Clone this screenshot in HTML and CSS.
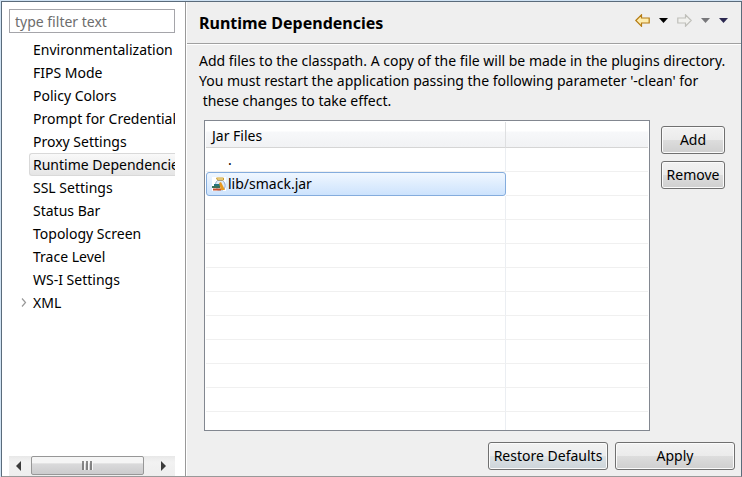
FILE: index.html
```html
<!DOCTYPE html>
<html lang="en">
<head>
<meta charset="utf-8">
<title>Preferences</title>
<link rel="stylesheet" href="styles.css">
</head>
<body>
<div class="window">
  <aside class="sidebar">
    <input class="filter" type="text" placeholder="type filter text" aria-label="Filter preferences">
    <nav class="tree">
      <a href="#">Environmentalization</a>
      <a href="#">FIPS Mode</a>
      <a href="#">Policy Colors</a>
      <a href="#">Prompt for Credentials</a>
      <a href="#">Proxy Settings</a>
      <a href="#" class="selected">Runtime Dependencies</a>
      <a href="#">SSL Settings</a>
      <a href="#">Status Bar</a>
      <a href="#">Topology Screen</a>
      <a href="#">Trace Level</a>
      <a href="#">WS-I Settings</a>
      <a href="#" class="parent"><svg class="twisty" viewBox="0 0 6 9"><path d="M1 .5 4.500 4.500 1 8.500" fill="none" stroke="#999" stroke-width="1.200"/></svg>XML</a>
    </nav>
    <div class="scrollbar">
      <button class="scroll-arrow" aria-label="Scroll left"><svg viewBox="0 0 5 10"><path d="M5 0v10L0 5z" fill="#3c3c3c"/></svg></button>
      <div class="thumb"><svg class="grip" viewBox="0 0 11 9"><path d="M1 0v9M5 0v9M9 0v9" stroke="#666" stroke-width="1.500"/><path d="M2.500 0v9M6.500 0v9M10.500 0v9" stroke="#f8f8f8"/></svg></div>
      <button class="scroll-arrow forward" aria-label="Scroll right"><svg viewBox="0 0 5 10"><path d="M0 0v10l5-5z" fill="#3c3c3c"/></svg></button>
    </div>
  </aside>
  <main class="page">
    <header class="page-header">
      <h1>Runtime Dependencies</h1>
      <div class="history">
        <button aria-label="Back"><svg class="arrow" viewBox="0 0 15 13"><path d="M.8 6.500 6.500.8V4h7.700v5H6.500v3.200z" fill="#fdecae" stroke="#b57c14" stroke-width="1.200"/></svg></button>
        <button aria-label="Back history"><svg class="caret" viewBox="0 0 9 5"><path d="M0 0h9L4.500 5z" fill="#000"/></svg></button>
        <button aria-label="Forward"><svg class="arrow" viewBox="0 0 15 13"><path d="M14.200 6.500 8.500.8V4H.8v5h7.700v3.200z" fill="#f1f1ee" stroke="#bfbfba" stroke-width="1.200"/></svg></button>
        <button aria-label="Forward history"><svg class="caret" viewBox="0 0 9 5"><path d="M0 0h9L4.500 5z" fill="#77777a"/></svg></button>
        <button aria-label="Menu"><svg class="caret" viewBox="0 0 9 5"><path d="M0 0h9L4.500 5z" fill="#2b2850"/></svg></button>
      </div>
    </header>
    <p class="description">Add files to the classpath. A copy of the file will be made in the plugins directory.<br>You must restart the application passing the following parameter '-clean' for<br>&nbsp;these changes to take effect.</p>
    <div class="content">
      <div class="table-box">
        <table>
          <thead><tr><th class="name">Jar Files</th><th></th></tr></thead>
          <tbody>
            <tr><td class="plain">.</td><td></td></tr>
            <tr><td class="picked"><div class="entry"><svg class="jar" viewBox="0 0 14 14"><rect width="14" height="14" fill="#fff"/><path d="M5.500 3.500C4 5 3.500 6 3.500 8l2 5h5.500c3-2 3-7-.5-9.500z" fill="#dfeaf7" stroke="#8aa5cc"/><path d="M4.500 1h7v2h-6z" fill="#fff3bf" stroke="#c99a2c"/><path d="M2 7h6v2H2z" fill="#26757e"/><path d="M0 9h8v2H0z" fill="#3c6f55"/><path d="M1 11.500h8v2H1z" fill="#c64f2b"/><path d="m7 6 2-1 4 8H9z" fill="#e89a20"/></svg>lib/smack.jar</div></td><td></td></tr>
            <tr><td></td><td></td></tr>
            <tr><td></td><td></td></tr>
            <tr><td></td><td></td></tr>
            <tr><td></td><td></td></tr>
            <tr><td></td><td></td></tr>
            <tr><td></td><td></td></tr>
            <tr><td></td><td></td></tr>
            <tr><td></td><td></td></tr>
            <tr><td></td><td></td></tr>
            <tr><td></td><td></td></tr>
          </tbody>
        </table>
      </div>
      <div class="side-buttons">
        <button class="button">Add</button>
        <button class="button">Remove</button>
      </div>
    </div>
    <footer class="actions">
      <button class="button cool">Restore Defaults</button>
      <button class="button">Apply</button>
    </footer>
  </main>
</div>
</body>
</html>
```
FILE: styles.css
```css
* { box-sizing: border-box; }
body {
  height: 100vh;
  margin: 0;
  padding: 1px 0 0 1px;
  background: #cfe2f3;
  color: #000;
  font: 14px/20px "Noto Sans", "Open Sans", sans-serif;
}
button, input { font: inherit; color: inherit; }
svg { display: block; }
.window {
  display: flex;
  height: 100%;
  border: 1px solid #5a6b7b;
  border-bottom-color: #999;
  background: #efefef;
}
.sidebar {
  flex: 0 0 184px;
  min-width: 0;
  display: flex;
  flex-direction: column;
  padding: 7px 10px 0 7px;
  border-right: 1px solid #999;
  background: #fff;
}
.filter {
  width: 100%;
  height: 24px;
  padding: 0 5px;
  border: 1px solid #a5a5aa;
  background: #fff;
  outline: 0;
}
.filter::placeholder { color: #6d6d6d; opacity: 1; }
.tree {
  flex: 1;
  display: flex;
  flex-direction: column;
  padding-top: 5px;
  overflow: hidden;
}
.tree a {
  height: 23px;
  margin-left: 20px;
  padding-left: 3px;
  border: 1px solid transparent;
  border-right: 0;
  line-height: 22px;
  color: inherit;
  text-decoration: none;
  white-space: nowrap;
}
.tree .selected {
  border-color: #d9d9d9;
  border-radius: 3px 0 0 3px;
  background: linear-gradient(#f9f9f9, #e5e5e5);
}
.tree .parent {
  display: flex;
  align-items: center;
  gap: 6px;
  margin-left: 8px;
}
.twisty { width: 6px; height: 9px; }
.scrollbar {
  display: flex;
  height: 20px;
  background: linear-gradient(#e8e8e8, #f2f2f2 30%, #eee);
}
.scroll-arrow {
  flex: 0 0 22px;
  display: flex;
  align-items: center;
  justify-content: center;
  padding: 0 4px 0 0;
  border: 0;
  background: none;
}
.scroll-arrow svg { width: 5px; height: 10px; }
.forward { flex: 1; padding: 0 0 0 8px; }
.thumb {
  flex: 0 0 113px;
  display: flex;
  align-items: center;
  justify-content: center;
  height: 19px;
  border: 1px solid #979797;
  border-radius: 2px;
  background: linear-gradient(#f5f5f5 0 35%, #dadadb 40%, #cbcbcd);
}
.grip { width: 11px; height: 9px; }
.page {
  flex: 1;
  min-width: 0;
  display: flex;
  flex-direction: column;
  border-left: 1px solid #fff;
}
.page-header {
  display: flex;
  justify-content: space-between;
  height: 42px;
  padding: 0 13px 0 12px;
  border-bottom: 1px solid #a0a0a0;
  box-shadow: 0 1px #fff;
}
h1 {
  margin: 0;
  font-size: 16px;
  line-height: 43px;
}
.history {
  display: flex;
  align-items: flex-start;
  gap: 9px;
  padding-top: 12px;
}
.history button {
  display: flex;
  align-items: center;
  height: 13px;
  padding: 0;
  border: 0;
  background: none;
}
.arrow { width: 15px; height: 13px; }
.caret { width: 9px; height: 5px; }
.description {
  margin: 0;
  padding: 7px 0 0 12px;
  white-space: nowrap;
}
.content {
  flex: 1;
  min-height: 0;
  display: flex;
  gap: 11px;
  padding: 9px 16px 0 17px;
}
.table-box {
  flex: 1;
  overflow: hidden;
  padding: 1px;
  border: 1px solid #828790;
  background: #fff;
}
table {
  width: 100%;
  border-collapse: separate;
  border-spacing: 0;
  table-layout: fixed;
}
th, td {
  height: 24px;
  padding: 0;
  border-right: 1px solid #ebeef2;
  border-bottom: 1px solid #f0f0f0;
  line-height: 22px;
  text-align: left;
  font-weight: 400;
}
tr > :last-child { border-right: 0; }
th {
  height: 26px;
  padding: 2px 0 0 6px;
  border-right-color: #dedfe1;
  border-bottom-color: #d5d5d5;
  background: linear-gradient(#fff 0 36%, #f7f8fa 40%, #f1f2f4);
}
.name { width: 300px; }
.plain { padding-left: 22px; }
.picked {
  border: 1px solid #84acdd;
  border-radius: 3px;
  background: linear-gradient(#f0f7ff, #cde3fd);
}
.entry {
  display: flex;
  align-items: center;
  gap: 2px;
  padding-left: 5px;
}
.jar { width: 14px; height: 14px; }
.side-buttons {
  flex: 0 0 64px;
  display: flex;
  flex-direction: column;
  gap: 7px;
  padding-top: 6px;
}
.button {
  height: 28px;
  padding: 0;
  border: 1px solid #707070;
  border-radius: 3px;
  background: linear-gradient(#f2f2f2, #ebebeb 50%, #dddddd 50%, #cfcfcf);
  box-shadow: inset 0 0 0 1px #fbfbfb;
  white-space: nowrap;
}
.cool { background: linear-gradient(#f2f2f2, #ebeced 50%, #dce2e5 50%, #ccd4d9); }
.actions {
  display: flex;
  justify-content: flex-end;
  gap: 7px;
  padding: 11px 6px 6px;
}
.actions .button { flex: 0 0 120px; }
```
